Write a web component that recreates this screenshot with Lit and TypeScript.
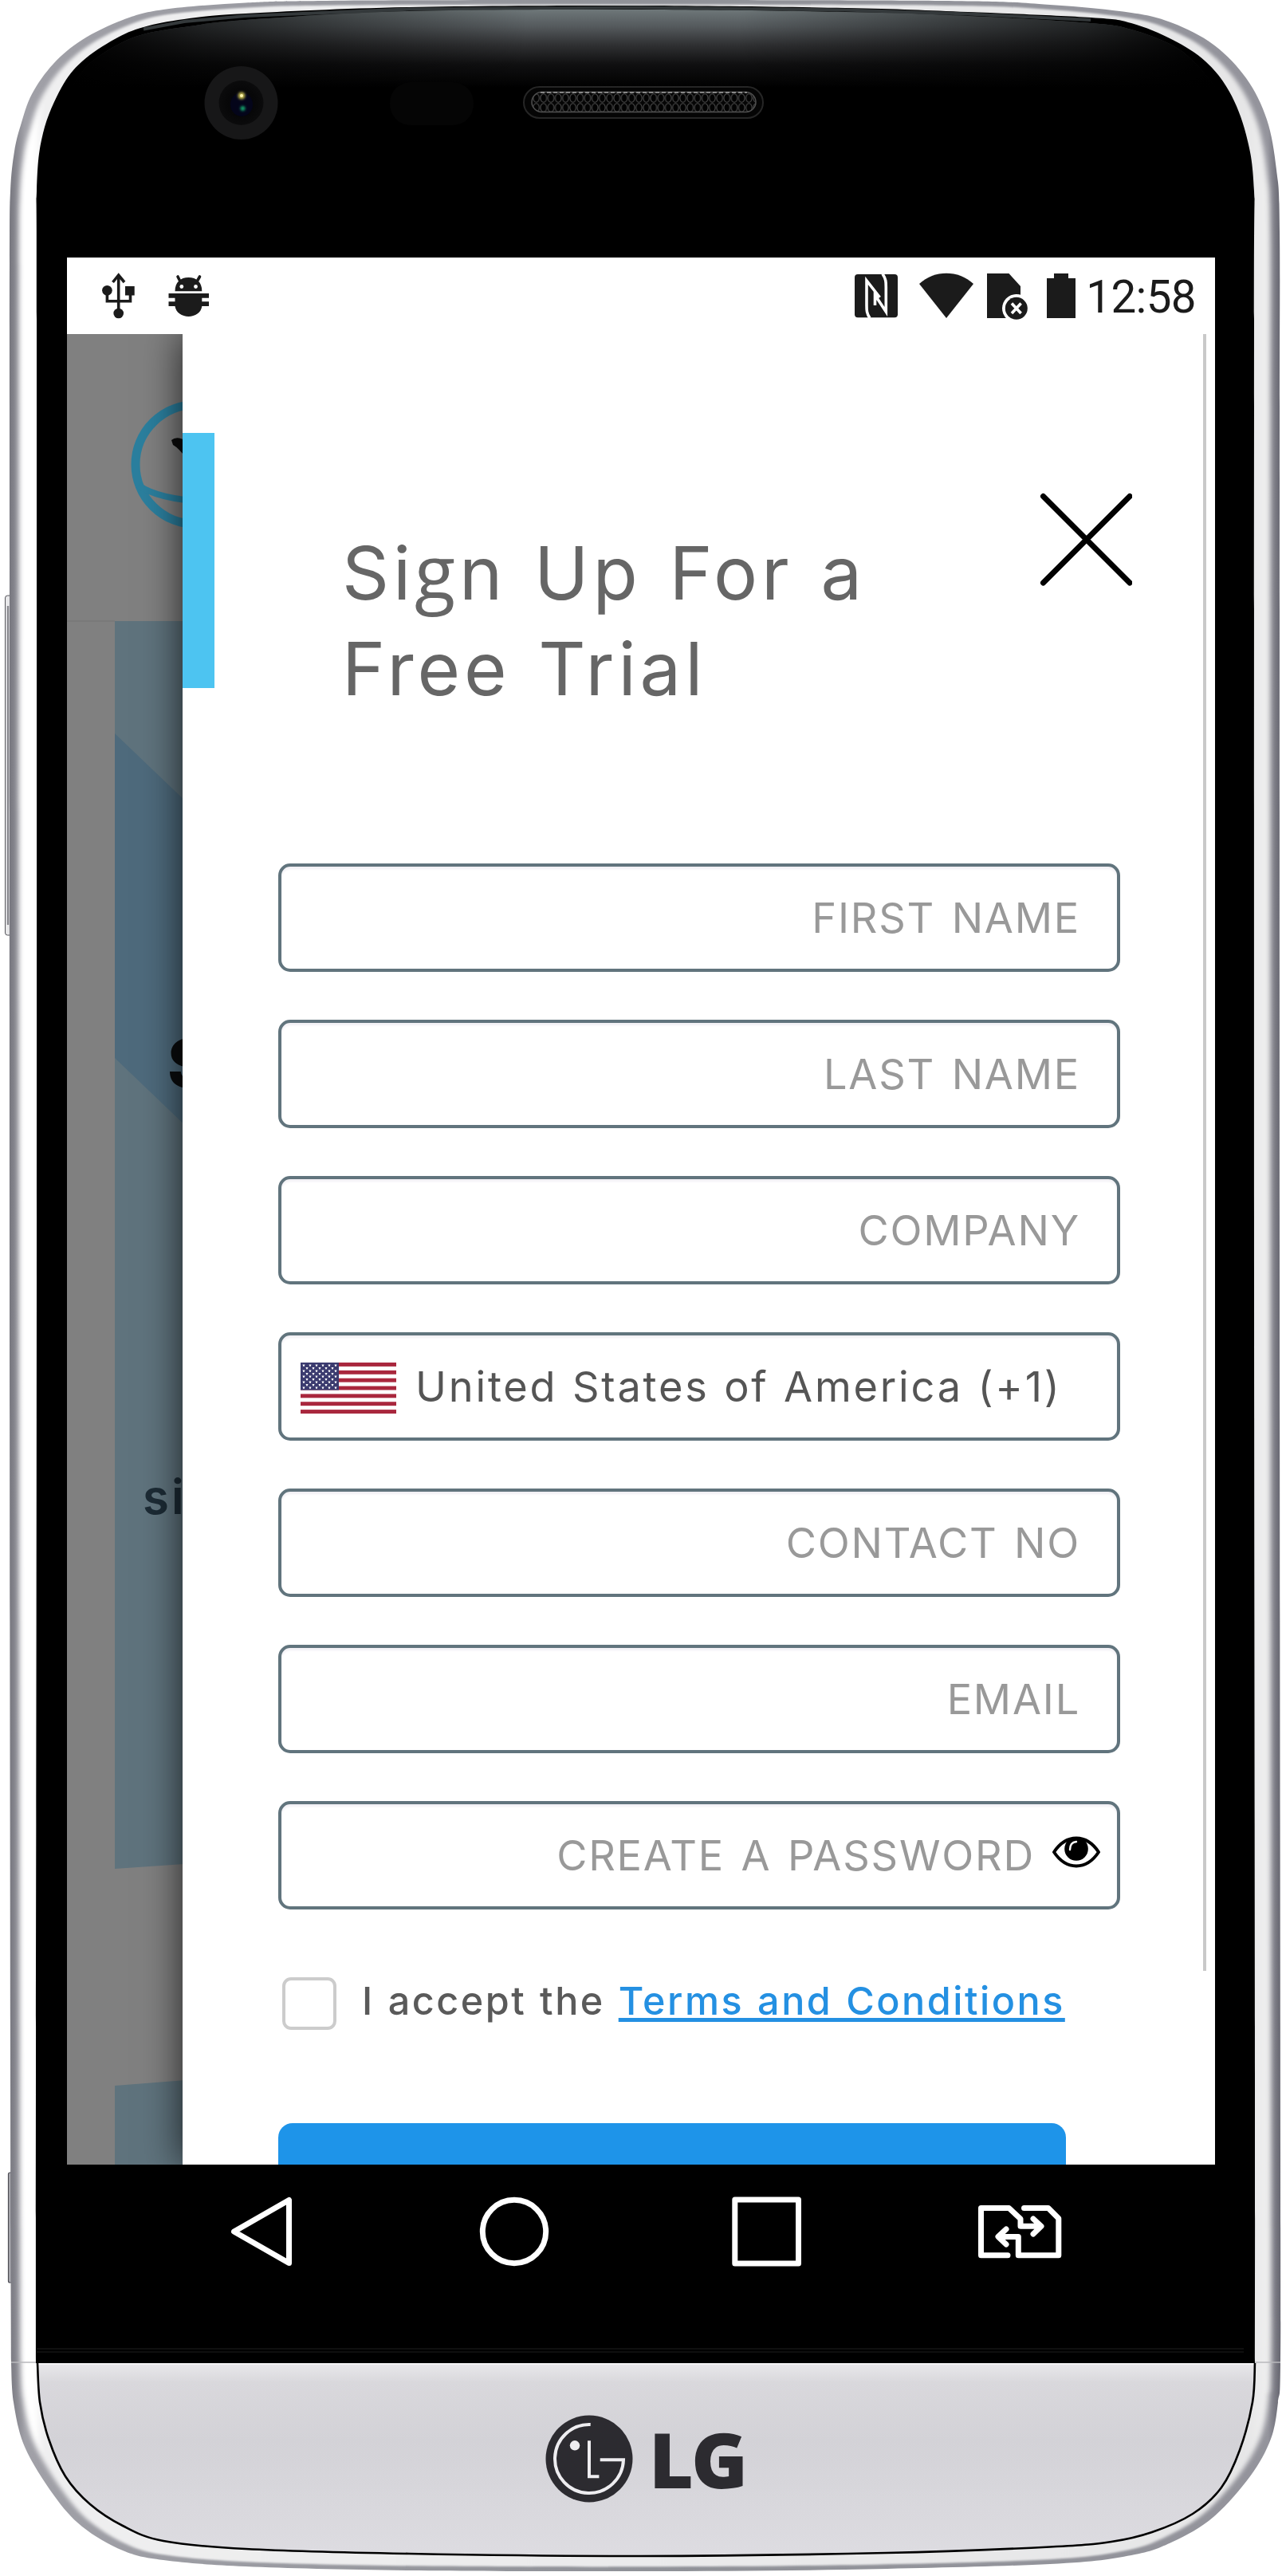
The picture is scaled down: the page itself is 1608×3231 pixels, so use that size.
import { LitElement, html, css, svg } from "lit";
import { customElement } from "lit/decorators.js";

type Pt = [number, number];

/** Smooth curve through a list of points (Catmull-Rom as cubic Béziers). */
function curve(pts: Pt[]): string {
  const r = (n: number) => n.toFixed(1);
  let d = `M${r(pts[0][0])} ${r(pts[0][1])}`;
  for (let i = 0; i < pts.length - 1; i++) {
    const p0 = pts[Math.max(0, i - 1)];
    const p1 = pts[i];
    const p2 = pts[i + 1];
    const p3 = pts[Math.min(pts.length - 1, i + 2)];
    d += `C${r(p1[0] + (p2[0] - p0[0]) / 6)} ${r(p1[1] + (p2[1] - p0[1]) / 6)} ${r(p2[0] - (p3[0] - p1[0]) / 6)} ${r(p2[1] - (p3[1] - p1[1]) / 6)} ${r(p2[0])} ${r(p2[1])}`;
  }
  return d;
}

const shellPath = curve([
  [14, 2964], [13, 2600], [12, 1600], [12, 700], [12, 330], [13, 240], [18, 190], [26, 157], [40, 118], [67, 80], [103, 50], [154, 25], [205, 12], [308, 3.5],
  [410, 1], [700, 0], [1180, 1], [1317, 6], [1419, 16], [1471, 29], [1522, 56], [1563, 98], [1589, 150], [1601, 213], [1605, 290], [1605, 600],
  [1605, 1600], [1606, 2700], [1606, 2964], [1603, 3013], [1594, 3059], [1568, 3106], [1522, 3157], [1471, 3188], [1419, 3205], [1317, 3216],
  [1060, 3223], [804, 3225], [513, 3224], [308, 3219], [205, 3211], [154, 3199], [103, 3169], [67, 3129], [31, 3069], [17, 3013], [14, 2964],
]) + "Z";

const glassPath = curve([
  [45, 2964], [45, 2600], [46, 1600], [46, 400], [46, 240], [54, 167], [77, 110], [103, 77], [144, 49], [180, 34], [231, 24], [308, 17], [513, 9], [804, 7],
  [1060, 10], [1214, 15], [1368, 22], [1419, 29], [1471, 50], [1512, 77], [1542, 115], [1563, 169], [1573, 240], [1573, 400], [1573, 1600], [1574, 2600], [1574, 2964],
]) + "Z";

const glarePath = curve([
  [90, 110], [110, 82], [144, 58], [180, 43], [231, 34], [308, 25], [513, 14], [804, 12], [1060, 15], [1214, 20], [1368, 29], [1419, 37], [1471, 57], [1500, 80], [1525, 110],
]) + "Z";

const chinLine = curve([
  [47, 2964], [50, 3013], [61, 3059], [82, 3106], [113, 3141], [154, 3168], [205, 3187], [308, 3197], [513, 3203], [804, 3206],
  [1112, 3202], [1317, 3194.5], [1394, 3188], [1445, 3176], [1496, 3153], [1532, 3120], [1555, 3073], [1571, 3013], [1574, 2964],
]);

const STARS = Array.from({ length: 9 }, (_, row) =>
  Array.from({ length: row % 2 ? 5 : 6 }, (_, col) => [4 + col * 8 + (row % 2 ? 4 : 0), 3.6 + row * 3.5]),
).flat();

@customElement("phone-shell")
class PhoneShell extends LitElement {
  static styles = css`
    :host { display: block; }
    .art { display: block; }
  `;

  render() {
    return html`<svg class="art" width="1608" height="3231" viewBox="0 0 1608 3231">
      <defs>
        <linearGradient id="edge" x1="0" x2="1" y1="0" y2="0">
          <stop offset="0" stop-color="#77777f" />
          <stop offset=".012" stop-color="#a0a0a7" />
          <stop offset=".5" stop-color="#909298" />
          <stop offset=".99" stop-color="#94949c" />
          <stop offset="1" stop-color="#666670" />
        </linearGradient>
        <linearGradient id="band" x1="0" x2="1" y1="0" y2="0">
          <stop offset="0" stop-color="#fff" />
          <stop offset=".012" stop-color="#fff" />
          <stop offset=".02" stop-color="#efeff0" />
          <stop offset=".98" stop-color="#e6e6e7" />
          <stop offset="1" stop-color="#f0f0f0" />
        </linearGradient>
        <linearGradient id="glare" x1="0" x2="0" y1="0" y2="1">
          <stop offset="0" stop-color="#6e7779" />
          <stop offset=".22" stop-color="#54595c" />
          <stop offset=".45" stop-color="#303133" />
          <stop offset=".7" stop-color="#101011" />
          <stop offset="1" stop-color="#000" />
        </linearGradient>
        <linearGradient id="fade" x1="0" x2="1" y1="0" y2="0">
          <stop offset="0" stop-color="#000" />
          <stop offset=".12" stop-color="#000" stop-opacity=".62" />
          <stop offset=".4" stop-color="#000" stop-opacity="0" />
          <stop offset=".58" stop-color="#000" stop-opacity="0" />
          <stop offset=".88" stop-color="#000" stop-opacity=".6" />
          <stop offset="1" stop-color="#000" />
        </linearGradient>
        <linearGradient id="metal" x1="0" x2="0" y1="0" y2="1">
          <stop offset="0" stop-color="#e9e8eb" />
          <stop offset=".1" stop-color="#d9d8dc" />
          <stop offset=".4" stop-color="#d3d2d7" />
          <stop offset="1" stop-color="#dddce1" />
        </linearGradient>
        <radialGradient id="lens"><stop offset="0" stop-color="#05060f" /><stop offset=".6" stop-color="#070708" /><stop offset="1" stop-color="#0b0b0c" /></radialGradient>
        <filter id="soft" x="-2%" y="-2%" width="104%" height="104%"><feGaussianBlur stdDeviation="3 1.2" /></filter>
        <filter id="dot" x="-100%" y="-100%" width="300%" height="300%"><feGaussianBlur stdDeviation="1.6" /></filter>
        <pattern id="mesh" width="9.2" height="12" patternUnits="userSpaceOnUse" x="668" y="117">
          <ellipse cx="4.6" cy="6" rx="3.8" ry="5.3" fill="#030303" stroke="#4a4a4a" stroke-width="1.1" />
        </pattern>
        <clipPath id="shellClip"><path d=${shellPath} /></clipPath>
        <clipPath id="glareClip"><path d=${glarePath} /></clipPath>
      </defs>

      <rect x="6.5" y="747" width="9" height="426" rx="3" fill="#e8e8ea" stroke="#55555b" stroke-width="1" />
      <path d="M10 760V1160" stroke="#8a8a90" stroke-width="2.4" />
      <rect x="10.5" y="2725" width="6" height="138" rx="2" fill="#aaaab0" stroke="#4b4b52" stroke-width="1.2" />

      <path d=${shellPath} fill="url(#edge)" />
      <g clip-path="url(#shellClip)">
        <path d=${shellPath} fill="url(#band)" filter="url(#soft)" transform="translate(808.5 1612.5) scale(.985 .9965) translate(-808.5 -1612.5)" />
        <path d="M14 2963H46M1574 2963H1606" stroke="#b9b9bd" stroke-width="1.5" />
      </g>

      <path d=${glassPath} fill="#000" />
      <path d="M180 36.500L231 27L308 20L513 11.500L804 9.500L1060 12.500L1214 17.500L1368 25" fill="none" stroke="#34393b" stroke-width="4" />
      <path d=${glarePath} fill="url(#glare)" />
      <g clip-path="url(#glareClip)"><rect x="80" y="11" width="1456" height="104" fill="url(#fade)" /></g>

      <circle cx="302.5" cy="129" r="46" fill="#171718" />
      <circle cx="302.5" cy="129" r="28" fill="url(#lens)" />
      <ellipse cx="303" cy="131" rx="14" ry="15" fill="#04051a" />
      <circle cx="303" cy="120" r="4.5" fill="#b9b04a" filter="url(#dot)" />
      <circle cx="303" cy="120" r="2" fill="#fff7b0" />
      <circle cx="304.5" cy="136" r="3" fill="#12a06a" filter="url(#dot)" />
      <rect x="489" y="103" width="105" height="54" rx="26" fill="#050505" />
      <rect x="657" y="109" width="300" height="39" rx="19.5" fill="#050505" stroke="#262626" stroke-width="2" />
      <rect x="667" y="115.500" width="281" height="25" rx="12.500" fill="url(#mesh)" stroke="#505050" stroke-width="1.5" />
      <path d="M678 116H937" stroke="#a0a0a0" stroke-width="1.6" stroke-dasharray="5 3" />

      <path d="${chinLine}Z" fill="url(#metal)" />
      <path d="M47 2965H1574" stroke="#f4f3f5" stroke-width="2" />
      <path d=${chinLine} fill="none" stroke="#000" stroke-width="2.6" />
      <path d="M46 2946H1560M46 2950H1560" stroke="#151515" stroke-width="1.5" />
    </svg>`;
  }
}

@customElement("status-bar")
class StatusBar extends LitElement {
  static styles = css`
    :host { display: flex; align-items: center; height: 96px; background: #fff; }
    .icon { flex: none; display: block; height: 60px; fill: #1b1b1b; }
    .bug { margin-left: 41px; }
    .nfc { margin-left: auto; }
    .wifi { margin-left: 27px; }
    .sim { margin-left: 17px; }
    .battery { margin-left: 22px; }
    .left { display: flex; padding-left: 43px; }
    .line { fill: none; stroke: #1b1b1b; stroke-width: 3.6; }
    .cut { fill: none; stroke: #fff; stroke-width: 3.6; }
    .eye { fill: #fff; }
    .time { font: 400 56.500px/96px Roboto, sans-serif; letter-spacing: -0.6px; color: #1b1b1b; margin: 4px 24px 0 13px; }
  `;

  render() {
    return html`
      <div class="left">
        <svg class="icon" width="43" viewBox="127 341 43 60">
          <path class="line" d="M148.700 347V390M141.500 354L148.700 345L156 354M134.400 366V377.700H163.500V366" />
          <circle cx="148.700" cy="393" r="6.300" /><circle cx="134.400" cy="364.300" r="6.300" /><rect x="157" y="359" width="11.700" height="11.500" />
        </svg>
        <svg class="icon bug" width="52" viewBox="210.500 341 52 60">
          <path class="line" stroke-linecap="round" d="M222.500 347L226 354M250 347L246 354" />
          <path d="M219 365.200C219 354 226 348 236 348S252.800 354 252.800 365.200Z" />
          <path d="M211 368H261.500V373.700H252.800V378.200H261.500V384H252.800C252 392 244 397 236 397S220 392 219 384H211V378.200H219V373.700H211Z" />
          <circle class="eye" cx="227.300" cy="359.500" r="2.400" /><circle class="eye" cx="245" cy="359.500" r="2.400" />
        </svg>
      </div>
      <svg class="icon nfc" width="54" viewBox="1072 341 54 60">
        <rect x="1072" y="344" width="54" height="54.300" rx="4" />
        <path class="cut" d="M1091 399C1087 393 1087 389 1087 383V352L1103.500 373M1107 343.500C1111.300 350 1111.300 354 1111.300 360V391L1097.500 370V383" />
      </svg>
      <svg class="icon wifi" width="68" viewBox="1153 341 68 60"><path d="M1153 356C1172 338.300 1202 338.300 1221 356L1187 399Z" /></svg>
      <svg class="icon sim" width="53" viewBox="1238 341 53 60">
        <path d="M1238 343H1265.500L1280 359V399H1238Z" />
        <circle class="eye" cx="1274.800" cy="386.800" r="17.800" /><circle cx="1274.800" cy="386.800" r="14" />
        <path class="cut" stroke-width="4.500" d="M1269 380.500L1280.600 393M1280.600 380.500L1269 393" />
      </svg>
      <svg class="icon battery" width="36" viewBox="1313 341 36 60"><path d="M1313 349H1322V343H1340V349H1349V399H1313Z" /></svg>
      <span class="time">12:58</span>
    `;
  }
}

@customElement("page-behind")
class PageBehind extends LitElement {
  static styles = css`
    :host { display: block; width: 1440px; height: 2296px; }
    .art { display: block; }
    .heading { font: 800 84px Inter, sans-serif; fill: #0a0c0e; }
    .copy { font: 600 60px Inter, sans-serif; fill: #1c2b35; letter-spacing: 3px; }
  `;

  render() {
    return html`<svg class="art" width="1440" height="2296" viewBox="84 419 1440 2296">
      <rect x="84" y="419" width="1440" height="2296" fill="#808080" />
      <path d="M84 779H144" stroke="#7a7a7a" stroke-width="2" />
      <path d="M144 779H400V2326L144 2344Z" fill="#5f737d" />
      <path d="M144 920L260 1031V1438L144 1327Z" fill="#4e6a7c" />
      <path d="M144 2616L260 2607V2715H144Z" fill="#5f737d" />
      <g fill="none" stroke="#2b7f9e" stroke-width="11">
        <ellipse cx="246" cy="582.500" rx="76" ry="75" />
        <path stroke-width="8" d="M174 609Q200 627 262 629" />
      </g>
      <path d="M215 552Q222 546 233 553V574Q224 562 217 558Z" fill="#0b0b0b" />
      <text class="heading" x="210" y="1364">S</text>
      <text class="copy" x="179" y="1899">si</text>
    </svg>`;
  }
}

@customElement("sign-up-drawer")
class SignUpDrawer extends LitElement {
  static styles = css`
    :host {
      position: relative; display: block; box-sizing: border-box; width: 1295px; height: 2296px;
      padding: 199px 0 0 120px; background: #fff; box-shadow: 0 0 46px rgba(0, 0, 0, 0.75);
      font-family: Inter, sans-serif;
    }
    .accent { position: absolute; left: 0; top: 124px; width: 40px; height: 320px; background: #4dc4f1; }
    .scroll { position: absolute; right: 11px; top: 0; width: 4px; height: 2053px; background: #c9c9c9; }
    .head { display: flex; justify-content: space-between; width: 1071px; }
    .title {
      margin: 41px 0 0 80px; width: 760px; color: #666;
      font: 400 92px/120px Inter, sans-serif; letter-spacing: 4.900px; word-spacing: 4px;
    }
    .looped { font-family: "Open Sans", sans-serif; font-size: 94px; line-height: 0; }
    .close { flex: none; display: block; stroke: #000; stroke-width: 7; stroke-linecap: round; }
    .fields { display: flex; flex-direction: column; gap: 60px; margin-top: 184px; width: 1056px; }
    .field {
      display: flex; align-items: center; justify-content: flex-end; box-sizing: border-box; height: 136px;
      padding: 0 46px 0 24px; border: 4px solid #61747d; border-radius: 15px; box-shadow: inset 0 3px 3px #f2f0f5;
      font-size: 52.300px; line-height: 1; letter-spacing: 1.800px; word-spacing: 4px; color: #999; white-space: nowrap;
    }
    .country { justify-content: flex-start; color: #555; letter-spacing: 2.800px; word-spacing: 1px; }
    .flag { flex: none; display: block; margin: 4px 24px 0 0; }
    .password { padding-right: 21px; }
    .eye { flex: none; display: block; margin: 0 0 8px 22px; }
    .terms { display: flex; align-items: center; margin: 85px 0 0 5px; height: 66px; white-space: pre; }
    .box { flex: none; box-sizing: border-box; width: 68px; height: 66px; border: 4px solid #ccc; border-radius: 11px; }
    .label { margin: 0 0 5px 32px; font-size: 48.500px; font-weight: 500; line-height: 1.2; letter-spacing: 2.500px; word-spacing: 1.500px; color: #5a5a5a; }
    .link {
      color: #2490e2; text-decoration: underline; text-decoration-thickness: 4.500px; text-underline-offset: 4px;
      text-decoration-skip-ink: none;
    }
    .submit { margin-top: 117px; width: 988px; height: 120px; border-radius: 18px; background: #1e94e9; }
  `;

  private flag() {
    return html`<svg class="flag" width="120" height="64" viewBox="0 0 120 64" preserveAspectRatio="none">
      <rect width="120" height="64" fill="#fff" />
      ${[0, 1, 2, 3, 4, 5, 6].map((i) => svg`<rect y=${i * 9.85} width="120" height="4.92" fill="#a9273d" />`)}
      <rect width="48" height="34.500" fill="#3b3b6f" />
      ${STARS.map(([x, y]) => svg`<path d=${`M${x - 1.5} ${y - 1}h3l-1 2.4h-1z`} fill="#fff" />`)}
    </svg>`;
  }

  render() {
    return html`
      <div class="accent"></div>
      <div class="scroll"></div>
      <div class="head">
        <div class="title">Si<span class="looped">g</span>n Up For a<br />Free Trial</div>
        <svg class="close" width="116" height="117" viewBox="0 0 116 117"><path d="M4.500 4.500L113 113M113 4.500L4.500 113" /></svg>
      </div>
      <div class="fields">
        <div class="field">FIRST NAME</div>
        <div class="field">LAST NAME</div>
        <div class="field">COMPANY</div>
        <div class="field country">${this.flag()}United States of America (+1)</div>
        <div class="field">CONTACT NO</div>
        <div class="field">EMAIL</div>
        <div class="field password">
          CREATE A PASSWORD
          <svg class="eye" width="60" height="40" viewBox="0 0 60 40">
            <path d="M2 20C10 8 19 2.500 30 2.500S50 8 58 20C50 32 41 37.500 30 37.500S10 32 2 20Z" fill="#fff" stroke="#000" stroke-width="4" stroke-linejoin="round" />
            <circle cx="30" cy="16" r="14.800" />
            <path d="M22 17C22 11 25 7.500 30 7" fill="none" stroke="#fff" stroke-width="2.400" stroke-linecap="round" />
          </svg>
        </div>
      </div>
      <div class="terms">
        <div class="box"></div>
        <div class="label">I accept the <span class="link">Terms and Conditions</span></div>
      </div>
      <div class="submit"></div>
    `;
  }
}

@customElement("nav-bar")
class NavBar extends LitElement {
  static styles = css`
    :host { display: flex; align-items: center; height: 168px; padding-left: 204px; box-sizing: border-box; background: #000; }
    .icon { flex: none; display: block; fill: none; stroke: #fff; stroke-width: 7; stroke-linejoin: round; stroke-linecap: round; }
    .home { margin-left: 232px; }
    .recent { margin-left: 225px; }
    .sims { margin-left: 216px; }
  `;

  render() {
    return html`
      <svg class="icon" width="80" height="92" viewBox="288 2753 80 92"><path d="M293.500 2799L362.500 2759.500V2838.500Z" /></svg>
      <svg class="icon home" width="90" height="92" viewBox="600 2753 90 92"><circle cx="645" cy="2799" r="39.700" /></svg>
      <svg class="icon recent" width="92" height="92" viewBox="915 2753 92 92"><rect x="921.800" y="2759" width="79.700" height="80" /></svg>
      <svg class="icon sims" width="112" height="92" viewBox="1223 2753 112 92">
        <path d="M1264 2828.700H1230.500V2769.500H1265.500L1280 2783V2792.300H1305M1296 2783L1306 2792.300L1296 2802M1284.500 2769.500H1314.800L1327.800 2782.500V2828.700H1277.300V2805.400H1253M1262 2796L1252 2805.400L1262 2815" />
      </svg>
    `;
  }
}

@customElement("brand-mark")
class BrandMark extends LitElement {
  static styles = css`
    :host { display: flex; align-items: center; justify-content: center; height: 110px; padding-left: 11px; color: #2c2b30; }
    .face { display: block; }
    .name {
      margin: 0 0 0 20px; font: 800 96px/110px "Open Sans", sans-serif; letter-spacing: -3px;
    }
  `;

  render() {
    return html`
      <svg class="face" width="110" height="110" viewBox="684.300 3029.700 110 110">
        <circle cx="739.300" cy="3084.700" r="54.500" fill="currentColor" />
        <g fill="none" stroke="#eeedf0" stroke-width="4">
          <path d="M741 3041.700A43 43 0 1 0 782.300 3086H753" /><path d="M739.300 3062V3107H751.700" />
        </g>
        <circle cx="721.300" cy="3068" r="6.200" fill="#eeedf0" />
      </svg>
      <span class="name">LG</span>
    `;
  }
}

@customElement("app-root")
class AppRoot extends LitElement {
  static styles = css`
    :host { display: block; }
    .device { position: relative; width: 1608px; height: 3231px; overflow: hidden; background: #fff; }
    .shell { position: absolute; inset: 0; }
    .front { position: relative; display: flex; flex-direction: column; padding: 323px 0 0 84px; width: 1440px; }
    .view { display: grid; height: 2296px; overflow: hidden; }
    .behind, .drawer { grid-area: 1 / 1; }
    .drawer { margin-left: 145px; }
    .brand { margin-top: 146px; }
  `;

  render() {
    return html`<div class="device">
      <phone-shell class="shell"></phone-shell>
      <div class="front">
        <status-bar></status-bar>
        <div class="view">
          <page-behind class="behind"></page-behind>
          <sign-up-drawer class="drawer"></sign-up-drawer>
        </div>
        <nav-bar></nav-bar>
        <brand-mark class="brand"></brand-mark>
      </div>
    </div>`;
  }
}
